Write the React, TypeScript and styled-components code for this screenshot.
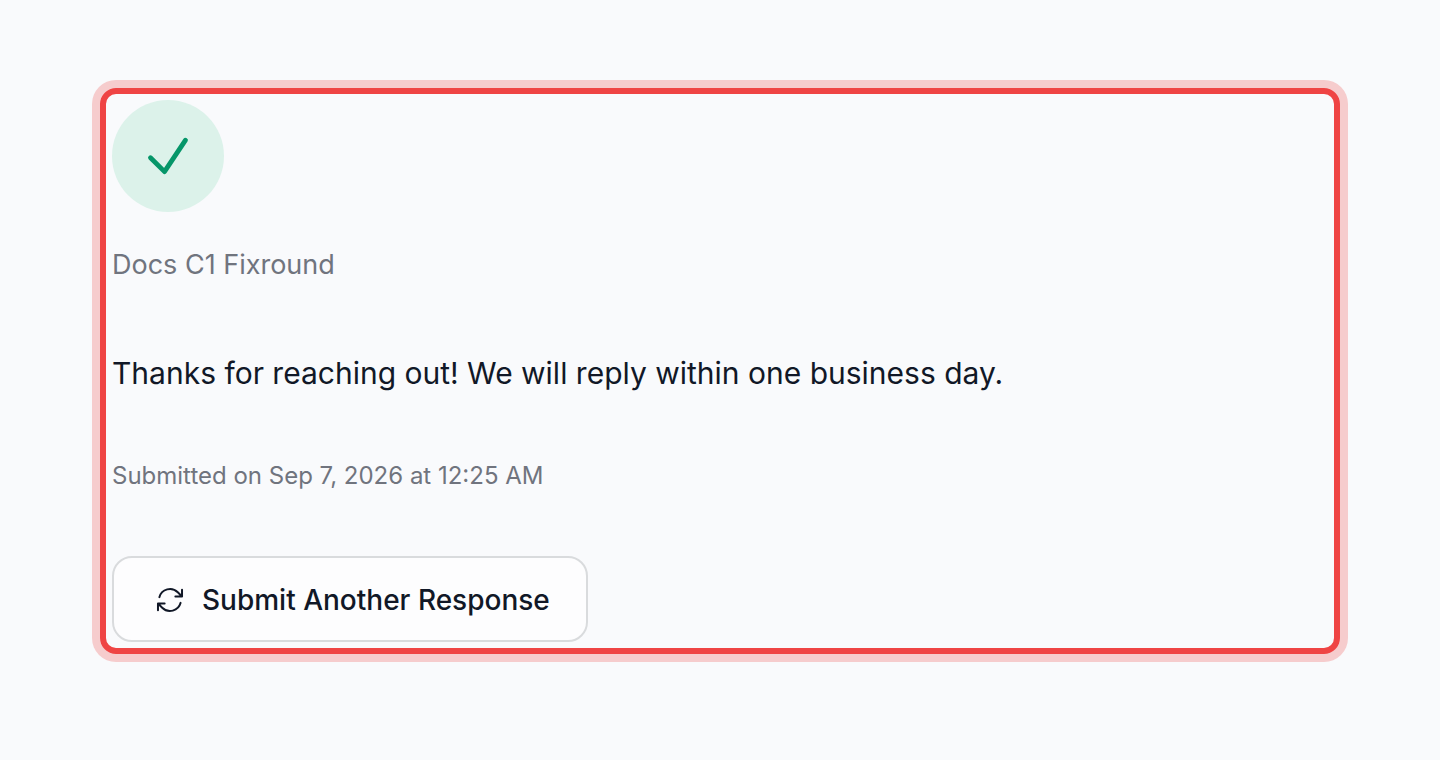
import React from "react";
import styled, { createGlobalStyle } from "styled-components";

const GlobalStyle = createGlobalStyle`
  *, *::before, *::after { box-sizing: border-box; }
  body {
    margin: 0;
    background: #f9fafc;
    color: #111827;
    font-family: Inter, "Liberation Sans", sans-serif;
  }
`;

const Page = styled.main`
  padding: 80px 92px;
`;

const Panel = styled.section`
  display: flex;
  flex-direction: column;
  align-items: flex-start;
  margin: 8px;
  padding: 6px;
  border: 6px solid #ef4444;
  border-radius: 16px;
  box-shadow: 0 0 0 8px #f6cccd;
`;

const Badge = styled.div`
  display: flex;
  align-items: center;
  justify-content: center;
  width: 112px;
  height: 112px;
  border-radius: 50%;
  background: #dcf2ea;
`;

const CheckMark = styled.svg`
  width: 56px;
  height: 56px;
  fill: none;
  stroke: #059669;
  stroke-width: 4.8;
  stroke-linecap: round;
  stroke-linejoin: round;
`;

const FormName = styled.p`
  margin: 32px 0 0;
  color: #70747e;
  font-size: 27px;
  line-height: 42px;
`;

const Message = styled.p`
  margin: 62px 0 0;
  font-size: 30px;
  line-height: 50px;
`;

const Timestamp = styled.p`
  margin: 62px 0 0;
  color: #70747e;
  font-size: 24px;
  line-height: 32px;
`;

const ResetButton = styled.button`
  display: inline-flex;
  align-items: center;
  gap: 16px;
  margin: 64px 0 0;
  padding: 22px 36px 20px 40px;
  border: 2px solid #d9dbdd;
  border-radius: 20px;
  background: #fdfdfe;
  color: #111827;
  font-family: inherit;
  font-size: 28px;
  font-weight: 500;
  line-height: 40px;
  cursor: pointer;
`;

const RefreshIcon = styled.svg`
  width: 32px;
  height: 32px;
  fill: none;
  stroke: currentColor;
  stroke-width: 1.5;
  stroke-linecap: round;
  stroke-linejoin: round;
`;

export default function App() {
  return (
    <>
      <GlobalStyle />
      <Page>
        <Panel>
          <Badge>
            <CheckMark viewBox="0 0 56 56" aria-hidden="true">
              <path d="M10.5 29.8 L24.5 43.6 L45.5 12.2" />
            </CheckMark>
          </Badge>
          <FormName>Docs C1 Fixround</FormName>
          <Message>Thanks for reaching out! We will reply within one business day.</Message>
          <Timestamp>Submitted on Sep 7, 2026 at 12:25 AM</Timestamp>
          <ResetButton type="button">
            <RefreshIcon viewBox="0 0 24 24" aria-hidden="true">
              <path d="M16.023 9.348h4.992v-.001M2.985 19.644v-4.992m0 0h4.992m-4.993 0 3.181 3.183a8.25 8.25 0 0 0 13.803-3.7M4.031 9.865a8.25 8.25 0 0 1 13.803-3.7l3.181 3.182m0-4.991v4.99" />
            </RefreshIcon>
            Submit Another Response
          </ResetButton>
        </Panel>
      </Page>
    </>
  );
}
